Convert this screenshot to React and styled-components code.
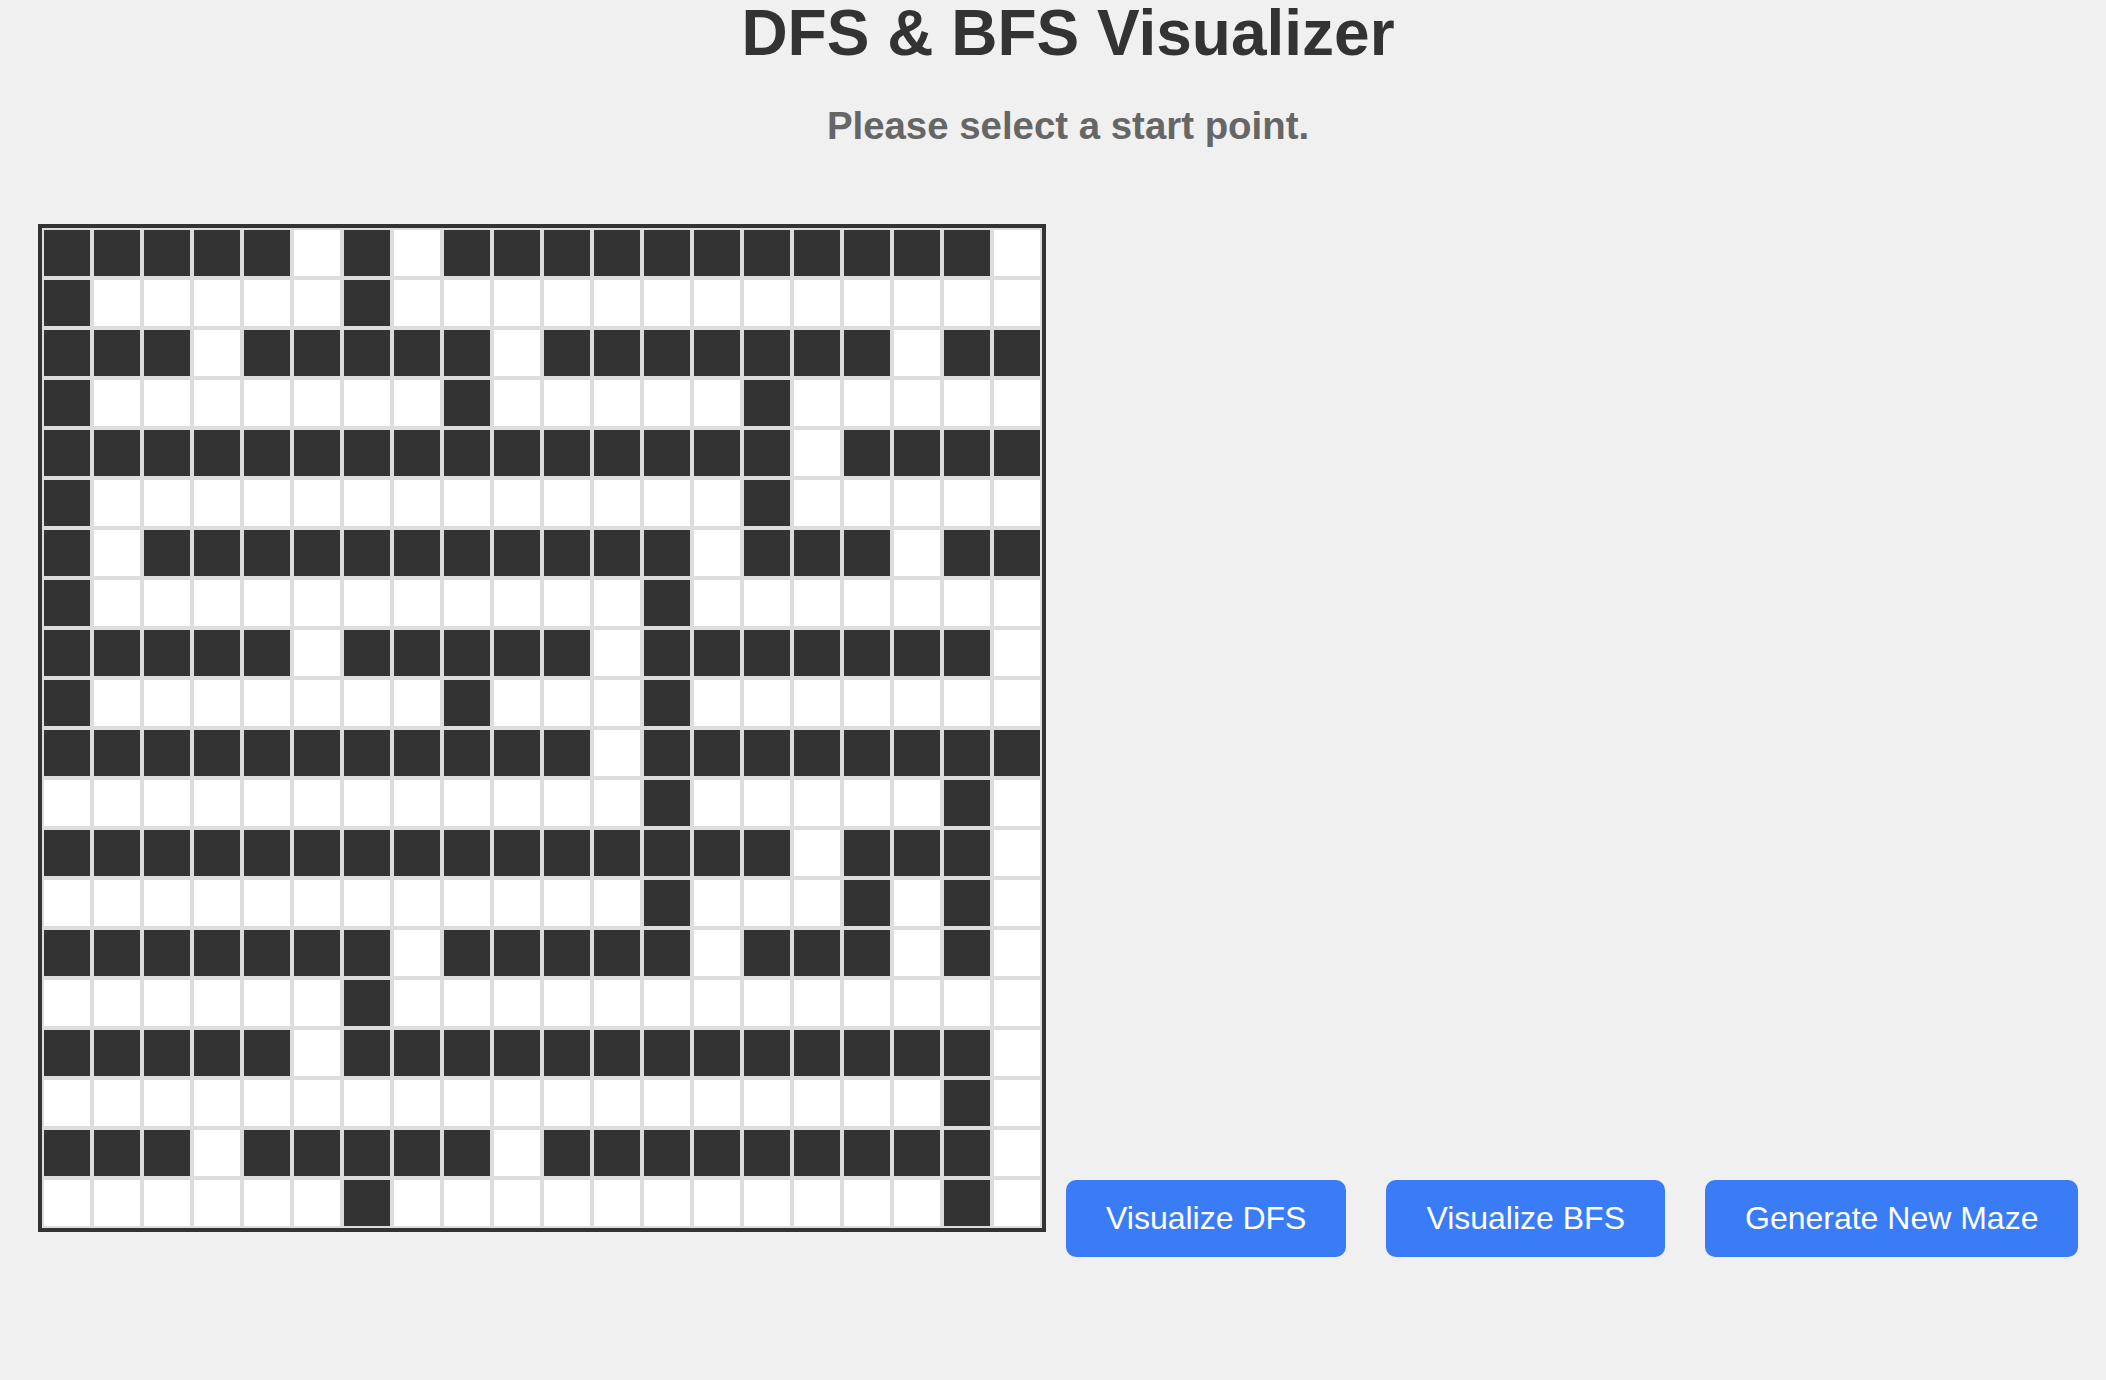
import React from "react";
import styled, { createGlobalStyle } from "styled-components";

const GlobalStyle = createGlobalStyle`
  html, body {
    margin: 0;
    padding: 0;
    background: #f0f0f0;
    font-family: "Liberation Sans", Arial, Helvetica, sans-serif;
  }
`;

const MAZE = [
  "#####.#.###########.",
  "#.....#.............",
  "###.#####.#######.##",
  "#.......#.....#.....",
  "###############.####",
  "#.............#.....",
  "#.###########.###.##",
  "#...........#.......",
  "#####.#####.#######.",
  "#.......#...#.......",
  "###########.########",
  "............#.....#.",
  "###############.###.",
  "............#...#.#.",
  "#######.#####.###.#.",
  "......#.............",
  "#####.#############.",
  "..................#.",
  "###.#####.#########.",
  "......#...........#.",
];

const Page = styled.div`
  padding: 0 8px 40px 38px;
`;

const Title = styled.h1`
  margin: 1px 0 0;
  font-size: 64px;
  line-height: 64px;
  font-weight: bold;
  color: #333;
  text-align: center;
`;

const Status = styled.p`
  margin: 39px 0 0;
  font-size: 38.4px;
  font-weight: bold;
  color: #666;
  text-align: center;
`;

const Row = styled.div`
  display: flex;
  align-items: flex-end;
  margin-top: 76px;
`;

const Grid = styled.div`
  flex: none;
  display: grid;
  grid-template-columns: repeat(20, 50px);
  grid-auto-rows: 50px;
  border: 4px solid #333;
  background: #fff;
`;

const Cell = styled.div`
  box-sizing: border-box;
  width: 50px;
  height: 50px;
  border: 2px solid #ddd;
  background: ${(p) => (p.$wall ? "#333" : "#fff")};
`;

const ButtonBar = styled.div`
  display: flex;
  flex: none;
  margin-bottom: -25px;
`;

const Button = styled.button`
  flex: none;
  margin: 0 20px;
  padding: 20px 40px;
  border: none;
  border-radius: 10px;
  background: #3a7bf6;
  color: #fff;
  font-family: "Liberation Sans", Arial, Helvetica, sans-serif;
  font-size: 32px;
  line-height: normal;
  white-space: nowrap;
  cursor: pointer;
`;

export default function App() {
  return (
    <Page>
      <GlobalStyle />
      <Title>DFS &amp; BFS Visualizer</Title>
      <Status>Please select a start point.</Status>
      <Row>
        <Grid>
          {MAZE.map((row, r) =>
            row.split("").map((c, i) => <Cell key={`${r}-${i}`} $wall={c === "#"} />)
          )}
        </Grid>
        <ButtonBar>
          <Button>Visualize DFS</Button>
          <Button>Visualize BFS</Button>
          <Button>Generate New Maze</Button>
        </ButtonBar>
      </Row>
    </Page>
  );
}
